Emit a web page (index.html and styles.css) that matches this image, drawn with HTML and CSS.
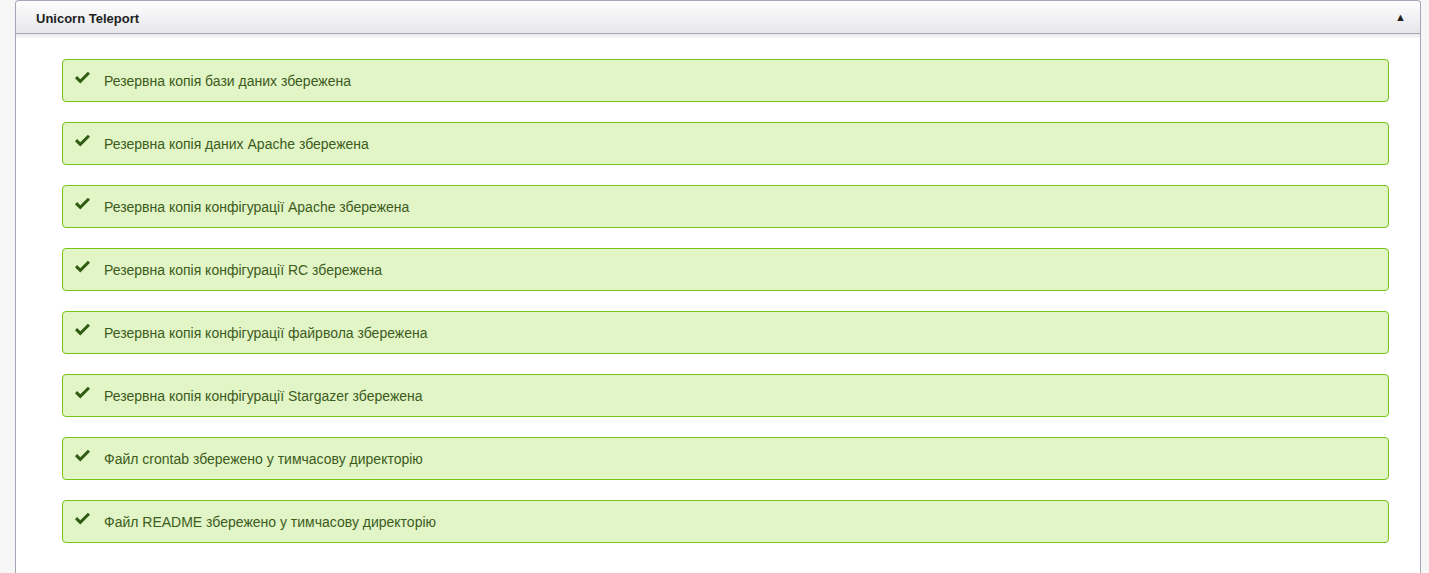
FILE: index.html
```
<!DOCTYPE html>
<html>
<head>
<meta charset="utf-8">
<link rel="stylesheet" href="styles.css">
</head>
<body>
<div class="panel">
  <div class="panel-head">
    <span class="title">Unicorn Teleport</span>
    <span class="toggle">▲</span>
  </div>
  <div class="panel-body">
    <div class="alert"><svg class="ico" viewBox="0 0 15 13"><path d="M0 7.2 L2.1 5.1 L5.3 8.3 L12.9 0.7 L15 2.8 L5.3 12.5 Z" fill="currentColor"/></svg><span class="msg">Резервна копія бази даних збережена</span></div>
    <div class="alert"><svg class="ico" viewBox="0 0 15 13"><path d="M0 7.2 L2.1 5.1 L5.3 8.3 L12.9 0.7 L15 2.8 L5.3 12.5 Z" fill="currentColor"/></svg><span class="msg">Резервна копія даних Apache збережена</span></div>
    <div class="alert"><svg class="ico" viewBox="0 0 15 13"><path d="M0 7.2 L2.1 5.1 L5.3 8.3 L12.9 0.7 L15 2.8 L5.3 12.5 Z" fill="currentColor"/></svg><span class="msg">Резервна копія конфігурації Apache збережена</span></div>
    <div class="alert"><svg class="ico" viewBox="0 0 15 13"><path d="M0 7.2 L2.1 5.1 L5.3 8.3 L12.9 0.7 L15 2.8 L5.3 12.5 Z" fill="currentColor"/></svg><span class="msg">Резервна копія конфігурації RC збережена</span></div>
    <div class="alert"><svg class="ico" viewBox="0 0 15 13"><path d="M0 7.2 L2.1 5.1 L5.3 8.3 L12.9 0.7 L15 2.8 L5.3 12.5 Z" fill="currentColor"/></svg><span class="msg">Резервна копія конфігурації файрвола збережена</span></div>
    <div class="alert"><svg class="ico" viewBox="0 0 15 13"><path d="M0 7.2 L2.1 5.1 L5.3 8.3 L12.9 0.7 L15 2.8 L5.3 12.5 Z" fill="currentColor"/></svg><span class="msg">Резервна копія конфігурації Stargazer збережена</span></div>
    <div class="alert"><svg class="ico" viewBox="0 0 15 13"><path d="M0 7.2 L2.1 5.1 L5.3 8.3 L12.9 0.7 L15 2.8 L5.3 12.5 Z" fill="currentColor"/></svg><span class="msg">Файл crontab збережено у тимчасову директорію</span></div>
    <div class="alert"><svg class="ico" viewBox="0 0 15 13"><path d="M0 7.2 L2.1 5.1 L5.3 8.3 L12.9 0.7 L15 2.8 L5.3 12.5 Z" fill="currentColor"/></svg><span class="msg">Файл README збережено у тимчасову директорію</span></div>
  </div>
</div>
</body>
</html>
```
FILE: styles.css
```
html, body {
  margin: 0;
  padding: 0;
  background: #f6f6f6;
  font-family: "Liberation Sans", Arial, sans-serif;
}
body {
  padding: 0 8px 0 15px;
}
.panel {
  background: #fff;
  border: 1px solid #a3a6b4;
  border-bottom: none;
  border-radius: 4px 4px 0 0;
  min-height: 100vh;
  box-sizing: border-box;
}
.panel-head {
  height: 33px;
  box-sizing: border-box;
  padding: 0 14px 0 20px;
  display: flex;
  align-items: center;
  justify-content: space-between;
  background: linear-gradient(#fdfdfd, #e7e7eb);
  border-bottom: 1px solid #a3a6b4;
  border-radius: 4px 4px 0 0;
  box-shadow: 0 1px 0 #ececec, 0 2px 0 #efefef, 0 3px 0 #f2f2f2, 0 4px 0 #f6f6f6;
}
.title {
  font-weight: bold;
  font-size: 13px;
  color: #222;
  padding-top: 2px;
}
.toggle {
  font-size: 11px;
  color: #222;
}
.panel-body {
  padding: 25px 31px 0 46px;
  display: flex;
  flex-direction: column;
  gap: 20px;
}
.alert {
  height: 43px;
  box-sizing: border-box;
  display: flex;
  align-items: center;
  background: #e1f5c6;
  border: 1px solid #77c414;
  border-radius: 4px;
  padding: 0 0 0 12px;
  color: #3d5b1d;
  font-size: 14px;
}
.msg {
  padding-top: 1px;
}
.ico {
  width: 15px;
  height: 13px;
  color: #2f5c12;
  margin-right: 14px;
  margin-top: -7px;
}
```
